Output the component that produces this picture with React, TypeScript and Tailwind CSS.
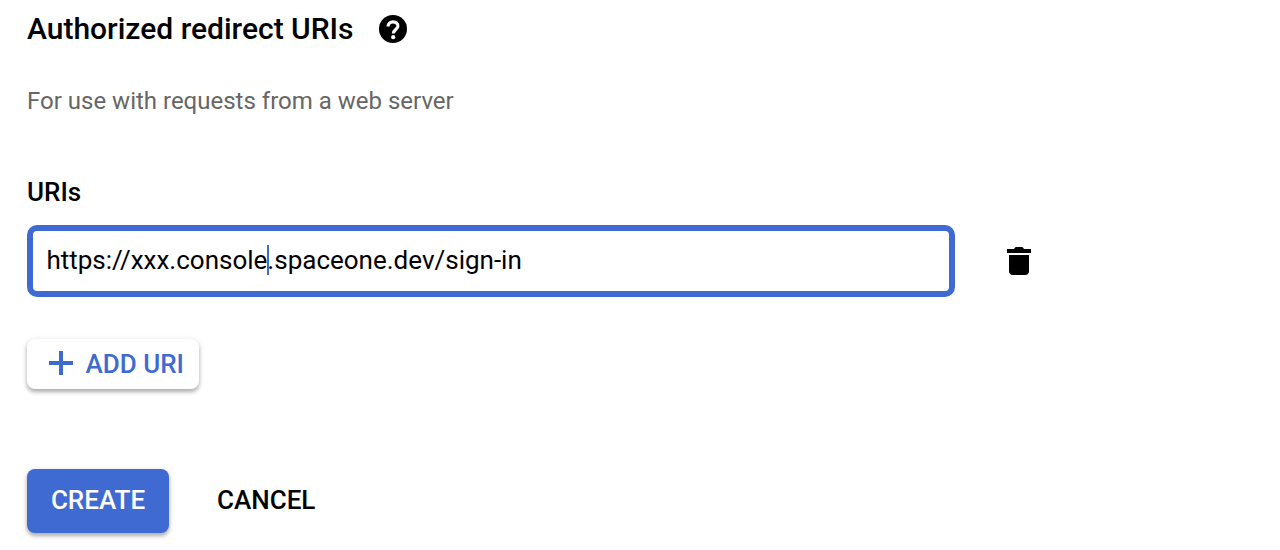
export default function App() {
  return (
    <main className="h-[550px] w-[1280px] overflow-hidden bg-white pl-[27px] font-['Roboto',sans-serif] text-black">
      <div className="flex h-[58px] items-center">
        <h1 className="w-[352px] text-[30px] leading-[36px] font-medium whitespace-nowrap">Authorized redirect URIs</h1>
        <svg viewBox="0 0 28 28" className="size-7">
          <circle cx="14" cy="14" r="14" fill="black" />
          <path d="M9.1 11.4C9.1 8.7 11.1 6.8 14 6.8s4.9 1.8 4.9 4.3c0 3.3-4.5 3.6-4.5 7.3" fill="none" stroke="white" strokeWidth="3.2" />
          <circle cx="14.2" cy="22.2" r="2.1" fill="white" />
        </svg>
      </div>
      <p className="mt-[28px] text-[24px] leading-[30px] text-[#666666]">For use with requests from a web server</p>
      <h2 className="mt-[61px] text-[26px] leading-[30px] font-medium">URIs</h2>
      <div className="mt-[18px] flex items-center">
        <div className="flex h-[72px] w-[928px] items-center rounded-[10px] border-[6px] border-[#3f6ad1] pb-[2px] pl-[13.4px] text-[26px]">
          <span>https://xxx.console</span>
          <span className="-mr-[2px] h-[30px] w-[2px] bg-[#3f6ad1]" />
          <span>.spaceone.dev/sign-in</span>
        </div>
        <svg viewBox="0 0 24 28" className="ml-[52px] h-7 w-6" fill="currentColor">
          <path d="M0 2h7q1-2 2-2h6q1 0 2 2h7v4H0zM2 8h20v16q0 4-4 4H6q-4 0-4-4z" />
        </svg>
      </div>
      <button className="mt-[42px] flex h-[50px] w-[172px] items-center rounded-[8px] bg-white pl-[22px] text-[26px] font-medium text-[#3f6ad1] shadow-[0_3px_4px_rgba(0,0,0,0.3),0_0_6px_rgba(0,0,0,0.08)]">
        <svg viewBox="0 0 24 24" className="mr-[12.5px] mb-[2px] size-6" fill="currentColor">
          <path d="M10 0h4v10h10v4H14v10h-4V14H0v-4h10z" />
        </svg>
        ADD URI
      </button>
      <div className="mt-[80px] flex h-[64px] items-center text-[26px] font-medium">
        <button className="h-[64px] w-[142px] rounded-[8px] bg-[#3f6ad1] pb-[2px] text-white shadow-[0_3px_4px_rgba(0,0,0,0.3),0_0_6px_rgba(0,0,0,0.08)]">CREATE</button>
        <button className="ml-[48px] pb-[2px]">CANCEL</button>
      </div>
    </main>
  );
}
